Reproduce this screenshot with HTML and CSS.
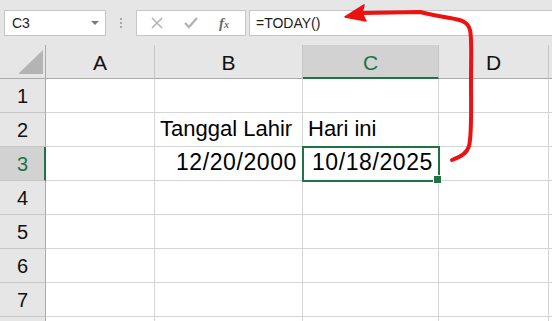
FILE: index.html
```html
<!DOCTYPE html>
<html lang="en">
<head>
    <meta charset="UTF-8">
    <title>TODAY</title>
    <link rel="stylesheet" href="styles.css">
</head>
<body>
    <div class="window">
        <div class="formula-bar">
            <div class="name-box">
                <span>C3</span>
                <span class="caret"></span>
            </div>
            <div class="grip"><i></i><i></i><i></i></div>
            <div class="fx-buttons">
                <svg class="icon" width="14" height="14" viewBox="0 0 14 14"><path d="M2 2 L12 12 M12 2 L2 12" stroke="#b4b4b4" stroke-width="1.6" fill="none"/></svg>
                <svg class="icon" width="16" height="14" viewBox="0 0 16 14"><path d="M2 7 L6 11 L14 2" stroke="#b4b4b4" stroke-width="2.4" fill="none"/></svg>
                <span class="fx">f<sub>x</sub></span>
            </div>
            <div class="formula-input">=TODAY()</div>
        </div>

        <div class="sheet">
            <div class="corner"><span class="tri"></span></div>
            <div class="col-head">A</div>
            <div class="col-head">B</div>
            <div class="col-head active">C</div>
            <div class="col-head">D</div>
            <div class="col-head last"></div>

            <div class="row-head">1</div>
            <div class="cell"></div><div class="cell"></div><div class="cell"></div><div class="cell"></div><div class="cell last"></div>

            <div class="row-head">2</div>
            <div class="cell"></div><div class="cell">Tanggal Lahir</div><div class="cell">Hari ini</div><div class="cell"></div><div class="cell last"></div>

            <div class="row-head active">3</div>
            <div class="cell"></div><div class="cell num">12/20/2000</div><div class="cell num selected">10/18/2025</div><div class="cell"></div><div class="cell last"></div>

            <div class="row-head">4</div>
            <div class="cell"></div><div class="cell"></div><div class="cell"></div><div class="cell"></div><div class="cell last"></div>

            <div class="row-head">5</div>
            <div class="cell"></div><div class="cell"></div><div class="cell"></div><div class="cell"></div><div class="cell last"></div>

            <div class="row-head">6</div>
            <div class="cell"></div><div class="cell"></div><div class="cell"></div><div class="cell"></div><div class="cell last"></div>

            <div class="row-head">7</div>
            <div class="cell"></div><div class="cell"></div><div class="cell"></div><div class="cell"></div><div class="cell last"></div>

            <div class="row-head"></div>
            <div class="cell"></div><div class="cell"></div><div class="cell"></div><div class="cell"></div><div class="cell last"></div>
        </div>

        <svg class="arrow" width="552" height="321" viewBox="0 0 552 321">
            <path d="M452 160 C462 156 467 153 469 146 C472 135 471 110 471 80 C471 55 472 38 470 30 C468 22 462 20 450 18 C438 16 428 14 420 12 L362 13" stroke="#ee1111" stroke-width="4" fill="none" stroke-linecap="round" stroke-linejoin="round"/>
            <path d="M345 17 L364 5 L362 13 L366 21 Z" fill="#ee1111" stroke="#ee1111" stroke-width="1.5" stroke-linejoin="round"/>
        </svg>
    </div>
</body>
</html>
```

FILE: styles.css
```css
* {
    margin: 0;
    padding: 0;
    box-sizing: border-box;
}

body {
    background: #ffffff;
    font-family: 'Liberation Sans', Arial, sans-serif;
    overflow: hidden;
}

.window {
    width: 552px;
    height: 321px;
    position: relative;
    overflow: hidden;
}

/* formula bar */

.formula-bar {
    height: 45px;
    background: #e6e6e6;
    display: flex;
    align-items: flex-start;
    padding: 10px 0 0 4px;
}

.name-box {
    width: 102px;
    height: 26px;
    background: #fff;
    border: 1px solid #c6c6c6;
    display: flex;
    align-items: center;
    justify-content: space-between;
    padding: 0 6px 0 7px;
    font-size: 14px;
    color: #222;
}

.caret {
    width: 0;
    height: 0;
    border-left: 4px solid transparent;
    border-right: 4px solid transparent;
    border-top: 4px solid #7a7a7a;
}

.grip {
    width: 30px;
    height: 26px;
    display: flex;
    flex-direction: column;
    align-items: center;
    justify-content: center;
    gap: 2px;
}

.grip i {
    width: 2px;
    height: 2px;
    background: #a8a8a8;
}

.fx-buttons {
    width: 110px;
    height: 26px;
    background: #fff;
    border: 1px solid #c6c6c6;
    display: flex;
    align-items: center;
    padding: 0 0 0 13px;
    gap: 19px;
}

.fx {
    font-family: 'Liberation Serif', 'Times New Roman', serif;
    font-style: italic;
    font-weight: bold;
    font-size: 15px;
    color: #6a6a6a;
    margin-left: 1px;
}

.fx sub {
    font-size: 10px;
    vertical-align: 0;
}

.formula-input {
    flex: 1;
    height: 26px;
    margin-left: 3px;
    background: #fff;
    border: 1px solid #c6c6c6;
    border-right: none;
    font-size: 14px;
    line-height: 24px;
    padding-left: 6px;
    color: #222;
}

/* sheet grid */

.sheet {
    display: grid;
    grid-template-columns: 46px 109px 148px 136px 110px 1fr;
    grid-template-rows: 34px repeat(8, 34px);
}

.corner {
    background: #e6e6e6;
    border-right: 1px solid #ababab;
    border-bottom: 1px solid #ababab;
    position: relative;
}

.tri {
    position: absolute;
    left: 18px;
    top: 5px;
    width: 25px;
    height: 24px;
    background: #b4b4b4;
    clip-path: polygon(100% 0, 100% 100%, 0 100%);
}

.col-head {
    background: #e6e6e6;
    border-right: 1px solid #c6c6c6;
    border-bottom: 1px solid #ababab;
    display: flex;
    align-items: center;
    justify-content: center;
    font-size: 21px;
    color: #111;
    padding-top: 3px;
}

.col-head.active {
    background: #d2d2d2;
    color: #217346;
    border-bottom: 2px solid #217346;
    padding-top: 4px;
}

.col-head.last {
    border-right: none;
}

.row-head {
    background: #e6e6e6;
    border-right: 1px solid #ababab;
    border-bottom: 1px solid #c6c6c6;
    display: flex;
    align-items: center;
    justify-content: center;
    font-size: 20px;
    color: #111;
    padding-top: 1px;
}

.row-head.active {
    background: #d2d2d2;
    color: #217346;
    border-right: 2px solid #217346;
    padding-left: 1px;
}

.cell {
    border-right: 1px solid #d4d4d4;
    border-bottom: 1px solid #d4d4d4;
    font-size: 22px;
    color: #000;
    display: flex;
    align-items: flex-end;
    padding: 0 5px 4px 5px;
    white-space: nowrap;
    position: relative;
}

.cell.last {
    border-right: none;
}

.cell.num {
    justify-content: flex-end;
    font-size: 23px;
    letter-spacing: 0.6px;
}

.cell.selected {
    outline: 2px solid #217346;
    outline-offset: -1px;
    z-index: 1;
}

.cell.selected::after {
    content: '';
    position: absolute;
    right: -4px;
    bottom: -4px;
    width: 7px;
    height: 7px;
    background: #217346;
    border: 1px solid #fff;
}

.arrow {
    position: absolute;
    left: 0;
    top: 0;
    pointer-events: none;
    z-index: 2;
}
```
